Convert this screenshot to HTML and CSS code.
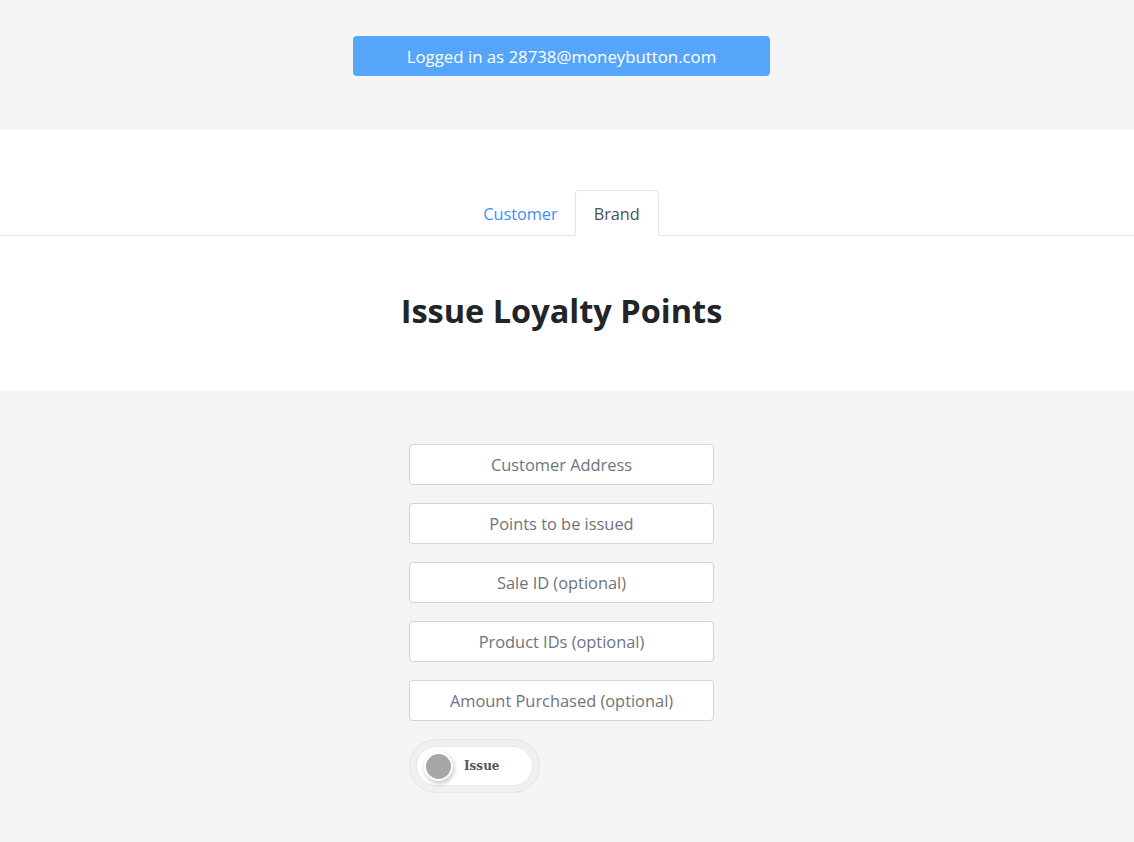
FILE: index.html
```html
<!DOCTYPE html>
<html lang="en">
<head>
<meta charset="utf-8">
<title>Issue Loyalty Points</title>
<link rel="stylesheet" href="styles.css">
</head>
<body>
<header class="top">
  <div class="login-badge">Logged in as 28738@moneybutton.com</div>
</header>
<section class="hero">
  <nav class="tabs">
    <a class="tab">Customer</a>
    <a class="tab active">Brand</a>
  </nav>
  <h1 class="title">Issue Loyalty Points</h1>
</section>
<main class="form-area">
  <form class="form">
    <input class="field" type="text" placeholder="Customer Address">
    <input class="field" type="text" placeholder="Points to be issued">
    <input class="field" type="text" placeholder="Sale ID (optional)">
    <input class="field" type="text" placeholder="Product IDs (optional)">
    <input class="field" type="text" placeholder="Amount Purchased (optional)">
    <div class="toggle-outer">
      <div class="toggle">
        <span class="knob"></span>
        <span class="toggle-label">Issue</span>
      </div>
    </div>
  </form>
</main>
</body>
</html>
```
FILE: styles.css
```css
* { box-sizing: border-box; }
html, body { margin: 0; padding: 0; }
body {
  background: #f5f5f5;
  font-family: "Open Sans", "Noto Sans", sans-serif;
  color: #212529;
  min-height: 842px;
}
.top {
  display: flex;
  justify-content: center;
  padding: 36px 11px 53px 0;
}
.login-badge {
  width: 417px;
  height: 40px;
  background: #55a6fa;
  color: #fff;
  border-radius: 4px;
  font-size: 16.8px;
  display: flex;
  align-items: center;
  justify-content: center;
}
.hero {
  background: #fff;
  border-top: 1px solid #f8f8f8;
  padding-top: 60px;
  height: 262px;
}
.tabs {
  display: flex;
  justify-content: center;
  border-bottom: 1px solid #e3e5e8;
  padding-right: 9px;
}
.tab {
  display: block;
  padding: 0 16px;
  height: 46px;
  line-height: 46px;
  font-size: 16.3px;
  color: #3d8ef8;
  border: 1px solid transparent;
  border-radius: 4px 4px 0 0;
  margin-bottom: -1px;
  cursor: pointer;
}
.tab.active {
  color: #495057;
  background: #fff;
  border-color: #e3e5e8 #e3e5e8 #fff;
  padding: 0 18px;
}
.title {
  margin: 0;
  text-align: center;
  font-size: 32.5px;
  font-weight: 700;
  line-height: 40px;
  padding: 55px 11px 0 0;
  color: #212529;
}
.form-area {
  padding: 53px 11px 0 0;
  display: flex;
  justify-content: center;
}
.form {
  width: 305px;
  display: flex;
  flex-direction: column;
  gap: 18px;
}
.field {
  width: 305px;
  height: 41px;
  border: 1px solid #ced4da;
  border-radius: 4px;
  background: #fff;
  text-align: center;
  font-family: inherit;
  font-size: 16.4px;
  color: #495057;
  padding: 0 12px;
}
.field::placeholder { color: #6c757d; opacity: 1; }
.toggle-outer {
  width: 131px;
  height: 54px;
  border-radius: 27px;
  background: #f0f0f0;
  border: 1px solid #e6e6e6;
  padding: 6px;
}
.toggle {
  height: 100%;
  border-radius: 21px;
  background: #fff;
  border: 1px solid #e8e8e8;
  display: flex;
  align-items: center;
  padding-left: 7px;
  gap: 11px;
}
.knob {
  width: 25px;
  height: 25px;
  border-radius: 50%;
  background: #a6a6a6;
  border: 2px solid #fff;
  box-shadow: 1px 2px 4px rgba(0,0,0,0.25);
  box-sizing: content-box;
}
.toggle-label {
  font-family: "DejaVu Serif", serif;
  font-weight: 700;
  font-size: 12px;
  color: #555;
}
```
